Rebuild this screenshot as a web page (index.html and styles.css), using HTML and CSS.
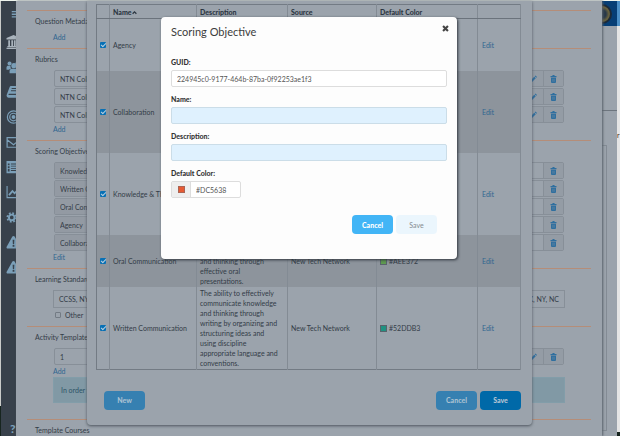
FILE: index.html
```html
<!DOCTYPE html>
<html lang="en">
<head>
  <meta charset="UTF-8">
  <meta name="viewport" content="width=device-width, initial-scale=1.0">
  <title>Scoring Objective</title>
  <link rel="stylesheet" href="styles.css">
</head>
<body>
  <!-- shared icons -->
  <svg class="sprite" aria-hidden="true">
    <symbol id="trash" viewBox="0 0 14 16"><path d="M1 2h3.500l.8-2h3.400l.8 2H13v2.500H1zM2 5.500h10V14a2 2 0 0 1-2 2H4a2 2 0 0 1-2-2z"/><path d="M5 7.500v6M7 7.500v6M9 7.500v6" stroke="#9098a1" stroke-width=".5"/></symbol>
    <symbol id="pencil" viewBox="0 0 14 14"><path d="M0 14l1-4 7.500-7.500 3 3L4 13zM9.500 1.500L11 0l3 3-1.500 1.500z"/></symbol>
    <symbol id="warning" viewBox="0 0 16 16"><path fill-rule="evenodd" d="M8 1c.6 0 1 .3 1.300.8l6.500 11.700c.5 1-.1 2-1.200 2H1.400c-1.100 0-1.700-1-1.200-2L6.700 1.800C7 1.300 7.400 1 8 1zM7 5.500l.3 5h1.400l.3-5zM7 11.500v2h2v-2z"/></symbol>
  </svg>

  <div class="page">
    <div class="edge-left"></div>
    <nav class="sidebar">
      <svg class="nav-icon menu" viewBox="0 0 16 16"><path d="M6 4.500h10v1.500H6zM6 7.500h10V9H6zM6 10.500h10V12H6z"/></svg>
      <svg class="nav-icon bank" viewBox="0 0 16 16"><path d="M8 0l8 3.500V5H0V3.500zM2 6h2v6.500h1.500V6h2v6.500h1V6h2v6.500H12V6h2v6.500h1V14H1v-1.500h1zM0 14.500h16V16H0z"/></svg>
      <svg class="nav-icon" viewBox="0 0 16 16"><circle cx="3.500" cy="4" r="2.300"/><circle cx="12.500" cy="4" r="2.300"/><circle cx="8.500" cy="6.500" r="3"/><path d="M0 11V8.500C0 7 1 6.500 2 6.500h2.500C4.500 9 5.500 9.500 5 10 3.500 10 3 11 3 11zM3.500 15v-2c0-2 1-3 2.500-3h5c1.500 0 2.500 1 2.500 3v2z"/></svg>
      <svg class="nav-icon" viewBox="0 0 16 16"><path fill-rule="evenodd" d="M5 1h10.500l-2.500 9H3C2 10 2 11.500 3 11.500h10L15.500 4 16 5l-2.500 9.500H2.500C.5 14.500-.3 12.500.3 11L3.500 2.500C3.800 1.500 4.300 1 5 1zM6 3.500l-.3 1h6l.3-1zM5.200 6l-.3 1h6l.3-1z"/></svg>
      <svg class="nav-icon" viewBox="0 0 16 16"><g fill="none" stroke="#7b9fb8" stroke-width="1.400"><circle cx="8" cy="8" r="7"/><circle cx="8" cy="8" r="4.300"/></g><circle cx="8" cy="8" r="2.200"/></svg>
      <svg class="nav-icon" viewBox="0 0 16 16"><path d="M.7 3h14.600v11H.7zM.7 5.500L8 11l7.300-5.500" fill="none" stroke="#7b9fb8" stroke-width="1.400"/></svg>
      <svg class="nav-icon" viewBox="0 0 16 16"><path fill-rule="evenodd" d="M0 1h16v14H0zM1.500 4v2h2V4zM1.500 7v2h2V7zM1.500 10v3h2v-3zM5 4v1h10V4zM5 6.500v1h10v-1zM5 9v1h10V9zM5 11.500v1h10v-1z"/></svg>
      <svg class="nav-icon" viewBox="0 0 16 16"><path d="M0 1h1.300v12.700H16V15H0z"/><path d="M2.800 11.500l4-4.500 2.500 2.500 4.500-5" fill="none" stroke="#7b9fb8" stroke-width="2"/></svg>
      <svg class="nav-icon" viewBox="0 0 16 16"><circle cx="6" cy="8.500" r="3.200" fill="none" stroke="#7b9fb8" stroke-width="2.200"/><circle cx="6" cy="8.500" r="5" fill="none" stroke="#7b9fb8" stroke-width="2" stroke-dasharray="2 1.930"/><circle cx="13.500" cy="4" r="1.800" fill="none" stroke="#7b9fb8" stroke-width="1.800"/><circle cx="13.500" cy="13" r="1.800" fill="none" stroke="#7b9fb8" stroke-width="1.800"/></svg>
      <svg class="nav-icon"><use href="#warning"/></svg>
      <svg class="nav-icon"><use href="#warning"/></svg>
      <a class="help" href="#">?</a>
    </nav>

    <main class="panel">
      <section class="section">
        <h2>Question Metadata</h2>
        <div class="section-body"><a href="#">Add</a></div>
      </section>

      <section class="section">
        <h2>Rubrics</h2>
        <div class="section-body">
          <div class="item"><input type="text" aria-label="Rubric 1" value="NTN Collaboration Rubric"><button aria-label="Edit"><svg><use href="#pencil"/></svg></button><button aria-label="Delete"><svg><use href="#trash"/></svg></button></div>
          <div class="item"><input type="text" aria-label="Rubric 2" value="NTN Collaboration Rubric"><button aria-label="Edit"><svg><use href="#pencil"/></svg></button><button aria-label="Delete"><svg><use href="#trash"/></svg></button></div>
          <div class="item"><input type="text" aria-label="Rubric 3" value="NTN Collaboration Rubric"><button aria-label="Edit"><svg><use href="#pencil"/></svg></button><button aria-label="Delete"><svg><use href="#trash"/></svg></button></div>
          <a href="#">Add</a>
        </div>
      </section>

      <section class="section">
        <h2>Scoring Objectives</h2>
        <div class="section-body">
          <div class="item locked"><input type="text" aria-label="Objective 1" value="Knowledge &amp; Thinking" readonly><span class="spacer"></span><button aria-label="Delete"><svg><use href="#trash"/></svg></button></div>
          <div class="item locked"><input type="text" aria-label="Objective 2" value="Written Communication" readonly><span class="spacer"></span><button aria-label="Delete"><svg><use href="#trash"/></svg></button></div>
          <div class="item locked"><input type="text" aria-label="Objective 3" value="Oral Communication" readonly><span class="spacer"></span><button aria-label="Delete"><svg><use href="#trash"/></svg></button></div>
          <div class="item locked"><input type="text" aria-label="Objective 4" value="Agency" readonly><span class="spacer"></span><button aria-label="Delete"><svg><use href="#trash"/></svg></button></div>
          <div class="item locked"><input type="text" aria-label="Objective 5" value="Collaboration" readonly><span class="spacer"></span><button aria-label="Delete"><svg><use href="#trash"/></svg></button></div>
          <a href="#">Edit</a>
        </div>
      </section>

      <section class="section">
        <h2>Learning Standards</h2>
        <div class="section-body">
          <div class="standards"><span>CCSS, NY</span><span>TX, NY, NC</span></div>
          <label class="other"><input type="checkbox"> Other</label>
        </div>
      </section>

      <section class="section">
        <h2>Activity Templates</h2>
        <div class="section-body">
          <div class="item"><input type="text" aria-label="Activity template" value="1"><button aria-label="Edit"><svg><use href="#pencil"/></svg></button><button aria-label="Delete"><svg><use href="#trash"/></svg></button></div>
          <a href="#">Add</a>
          <p class="info">In order to</p>
        </div>
      </section>

      <section class="section">
        <h2>Template Courses</h2>
      </section>
    </main>

    <div class="behind">
      <div class="behind-header"><span class="avatar"></span></div>
      <div class="behind-top"></div>
      <div class="behind-gap"></div>
      <div class="behind-box"></div>
    </div>
    <div class="edge-right"><span>r</span></div>
  </div>

  <div class="dialog list-dialog">
    <table class="objectives">
      <colgroup>
        <col class="col-check"><col class="col-name"><col class="col-desc"><col class="col-source"><col class="col-color"><col>
      </colgroup>
      <thead>
        <tr><th></th><th>Name<svg class="sort" viewBox="0 0 8 8"><path d="M1 6l3-3 3 3" fill="none" stroke="#2c3642" stroke-width="2"/></svg></th><th>Description</th><th>Source</th><th>Default Color</th><th></th></tr>
      </thead>
      <tbody>
        <tr class="short"><td><input type="checkbox" aria-label="Agency" checked></td><td>Agency</td><td></td><td></td><td></td><td><a href="#">Edit</a></td></tr>
        <tr class="tall"><td><input type="checkbox" aria-label="Collaboration" checked></td><td>Collaboration</td><td></td><td></td><td></td><td><a href="#">Edit</a></td></tr>
        <tr class="tall"><td><input type="checkbox" aria-label="Knowledge &amp; Thinking" checked></td><td>Knowledge &amp; Thinking</td><td></td><td></td><td></td><td><a href="#">Edit</a></td></tr>
        <tr class="short"><td><input type="checkbox" aria-label="Oral Communication" checked></td><td>Oral Communication</td><td>The ability to<br>communicate knowledge<br>and thinking through<br>effective oral<br>presentations.</td><td>New Tech Network</td><td><span class="swatch green"></span>#AEE372</td><td><a href="#">Edit</a></td></tr>
        <tr class="tall"><td><input type="checkbox" aria-label="Written Communication" checked></td><td>Written Communication</td><td>The ability to effectively<br>communicate knowledge<br>and thinking through<br>writing by organizing and<br>structuring ideas and<br>using discipline<br>appropriate language and<br>conventions.</td><td>New Tech Network</td><td><span class="swatch teal"></span>#52DDB3</td><td><a href="#">Edit</a></td></tr>
      </tbody>
    </table>
    <div class="list-footer">
      <button class="btn dim">New</button>
      <button class="btn dim push">Cancel</button>
      <button class="btn strong">Save</button>
    </div>
  </div>

  <form class="dialog edit-dialog" role="dialog" aria-labelledby="dialog-title">
    <div class="dialog-header">
      <h1 id="dialog-title">Scoring Objective</h1>
      <button type="button" class="close" aria-label="Close"><svg viewBox="0 0 10 10"><path d="M1.500 1.500l7 7M8.500 1.500l-7 7" stroke="#444" stroke-width="3"/></svg></button>
    </div>
    <label for="guid">GUID:</label>
    <input class="field" id="guid" type="text" value="224945c0-9177-464b-87ba-0f92253ae1f3">
    <label for="name">Name:</label>
    <input class="field required" id="name" type="text">
    <label for="description">Description:</label>
    <input class="field required" id="description" type="text">
    <label for="color">Default Color:</label>
    <div class="color-group">
      <span class="addon"><span class="swatch red"></span></span>
      <input id="color" type="text" value="#DC5638">
    </div>
    <div class="dialog-footer">
      <button type="button" class="btn primary">Cancel</button>
      <button type="button" class="btn" disabled>Save</button>
    </div>
  </form>
</body>
</html>
```
FILE: styles.css
```css
* {
  box-sizing: border-box;
}
body {
  margin: 0;
  height: 100vh;
  overflow: hidden;
  position: relative;
  background: #9ba3ac;
  font-family: Lato, "Liberation Sans", sans-serif;
  font-size: 7px;
  line-height: 10px;
  color: #333c47;
}
input,
button {
  font: inherit;
  color: inherit;
  margin: 0;
}
button {
  cursor: pointer;
}
a {
  color: #2f6690;
  text-decoration: none;
}
.sprite {
  display: none;
}

/* page behind the dialogs */
.page {
  display: flex;
  height: 100%;
  border-top: 1px solid #eef4ed;
}
.edge-left {
  width: 1px;
  background: linear-gradient(#c9cbc9 93%, #17251f 93%);
}
.sidebar {
  display: flex;
  flex-direction: column;
  align-items: flex-start;
  gap: 11px;
  width: 15px;
  padding: 6px 0 1px 5px;
  background: #38414b;
  overflow: hidden;
}
.nav-icon {
  flex: none;
  width: 15px;
  height: 14px;
  fill: #7b9fb8;
}
.menu {
  margin-bottom: 3px;
}
.bank {
  fill: #a9b3bc;
}
.help {
  margin: auto 0 0 4px;
  font-size: 12px;
  font-weight: 900;
  line-height: 12px;
  color: #7b9fb8;
}
.panel {
  flex: 1;
  min-width: 0;
  padding: 9px 11px 0;
  background: #9ba3ac;
  box-shadow: 1px 0 2px #59616a;
  position: relative;
  overflow: hidden;
}
.section {
  padding: 4px 26px 6px 8px;
  border-top: 1px solid #b58d78;
}
.section h2 {
  margin: 0 0 5px;
  font-size: 7px;
  font-weight: normal;
  line-height: 12px;
}
.section-body {
  padding-left: 18px;
}
.section-body > a {
  display: block;
}
.item {
  display: flex;
  height: 17px;
  margin: 0 1px 1px;
  border: 1px solid #878f98;
  border-radius: 2px;
}
.item input {
  flex: 1;
  min-width: 0;
  padding: 0 5px;
  border: 0;
  background: transparent;
}
.item button {
  display: flex;
  align-items: center;
  justify-content: center;
  width: 20px;
  padding: 0;
  border: 0;
  border-left: 1px solid #878f98;
  background: #949ca5;
}
.item svg {
  width: 7px;
  height: 8px;
  fill: #2f6f9f;
}
.locked input {
  background: #939aa3;
}
.spacer {
  width: 20px;
}
.standards {
  display: flex;
  justify-content: space-between;
  margin-bottom: 2px;
  padding: 3px 5px;
  border: 1px solid #878f98;
}
.other {
  display: flex;
  align-items: center;
  gap: 4px;
  padding-left: 2px;
}
.other input {
  appearance: none;
  width: 6px;
  height: 6px;
  border: 1px solid #737b84;
  border-radius: 1px;
}
.info {
  margin: 1px 0 10px;
  padding: 7px;
  border: 1px solid #829da9;
  background: #8199a5;
  color: #2d5467;
}
.behind {
  display: flex;
  flex-direction: column;
  width: 15px;
}
.behind-header {
  height: 25px;
  background: #063e75;
  overflow: hidden;
}
.avatar {
  display: block;
  width: 20px;
  height: 20px;
  margin: 3px 0 0 -10px;
  border: 2px solid #1d2a38;
  border-radius: 50%;
  background: radial-gradient(#29394a 35%, #67613f 60%);
}
.behind-top {
  height: 85px;
  border-bottom: 1px solid #6d757e;
}
.behind-gap {
  height: 34px;
}
.behind-box {
  flex: 1;
  width: 5px;
  margin-bottom: 5px;
  border: 1px solid #838b94;
  border-left: 0;
}
.edge-right {
  width: 3px;
  padding-top: 129px;
  background: linear-gradient(#4b8fc6 25px, #e5e5e5 25px, #e5e5e5 431px, #17251f 431px);
  color: #4a2e20;
  overflow: hidden;
}

/* dialogs */
.dialog {
  position: absolute;
  border-radius: 4px;
}
.btn {
  width: 41px;
  height: 19px;
  padding: 0;
  border: 0;
  border-radius: 4px;
  font-weight: 900;
  color: #fff;
}
.btn.primary {
  background: #42b5f6;
}
.btn.dim {
  background: #3680b1;
  color: #a9c0d2;
}
.btn.strong {
  background: #0069a8;
  color: #b5c5d4;
}
.btn:disabled {
  background: #ebf6fd;
  color: #858b90;
  font-weight: normal;
}
.swatch {
  display: inline-block;
  width: 7px;
  height: 7px;
  border: 1px solid #59636b;
}
.swatch.green {
  background: #5f9a50;
}
.swatch.teal {
  background: #209181;
}
.swatch.red {
  background: #e65a33;
  border-color: #a96454;
}

.list-dialog {
  top: 1px;
  left: 87px;
  right: 88px;
  padding: 3px 11px 15px 9px;
  background: #9ba3ac;
  border-top-left-radius: 0;
  border-top-right-radius: 0;
  box-shadow: 0 1px 3px #4c545d;
}
.objectives {
  width: 100%;
  table-layout: fixed;
  border-collapse: collapse;
  border: 1px solid #737b84;
}
.col-check {
  width: 13px;
}
.col-name {
  width: 87px;
}
.col-desc {
  width: 91px;
}
.col-source {
  width: 89px;
}
.col-color {
  width: 101px;
}
.objectives th,
.objectives td {
  padding: 1px 0 1px 3px;
  border-right: 1px solid #838b94;
  text-align: left;
  vertical-align: middle;
  white-space: nowrap;
}
.objectives th {
  height: 14px;
  border-bottom: 1px solid #6b737c;
  font-weight: 900;
  color: #2c3642;
}
.objectives tr > :last-child {
  padding-left: 4px;
}
.short {
  height: 52px;
}
.tall {
  height: 82px;
}
.objectives tbody tr:nth-child(even) {
  background: #8d949c;
}
.objectives input {
  appearance: none;
  display: block;
  width: 6px;
  height: 6px;
  border-radius: 1px;
  background: #0870b5;
}
.objectives input::after {
  content: "";
  display: block;
  width: 2px;
  height: 4px;
  margin-left: 2px;
  border: solid #b9cedd;
  border-width: 0 1px 1px 0;
  transform: rotate(45deg);
}
.sort {
  width: 5px;
  height: 5px;
}
.objectives .swatch {
  margin-right: 2px;
  vertical-align: -1px;
}
.list-footer {
  display: flex;
  gap: 3px;
  padding: 21px 0 0 8px;
}
.push {
  margin-left: auto;
}

.edit-dialog {
  top: 17px;
  left: 161px;
  right: 163px;
  padding: 7px 10px 25px;
  background: #fdfdfd;
  box-shadow: 1px 1px 3px #2d343c;
}
.dialog-header {
  display: flex;
  justify-content: space-between;
  align-items: flex-start;
  height: 33px;
}
.dialog-header h1 {
  margin: 0;
  font-size: 11px;
  font-weight: normal;
  line-height: 16px;
  color: #3c3c3c;
}
.close {
  display: flex;
  padding: 1px 0;
  margin-right: -2px;
  border: 0;
  background: none;
}
.close svg {
  width: 7px;
  height: 7px;
}
.edit-dialog label {
  display: block;
  margin-bottom: 3px;
  font-weight: 900;
  color: #333;
}
.field,
.color-group {
  display: block;
  height: 17px;
  margin-bottom: 7px;
  border: 1px solid #ddd;
  border-radius: 2px;
  background: #fff;
  color: #555;
}
.field {
  width: 100%;
  padding: 0 5px;
}
.field.required {
  border-color: #cbdde8;
  background: #dff1fe;
}
.color-group {
  display: flex;
  width: 70px;
}
.color-group input {
  flex: 1;
  min-width: 0;
  padding: 0 5px;
  border: 0;
  background: transparent;
}
.addon {
  display: flex;
  align-items: center;
  justify-content: center;
  width: 19px;
  border-right: 1px solid #ddd;
  background: #eee;
}
.dialog-footer {
  display: flex;
  justify-content: flex-end;
  gap: 3px;
  padding: 10px 10px 0 0;
}
```
